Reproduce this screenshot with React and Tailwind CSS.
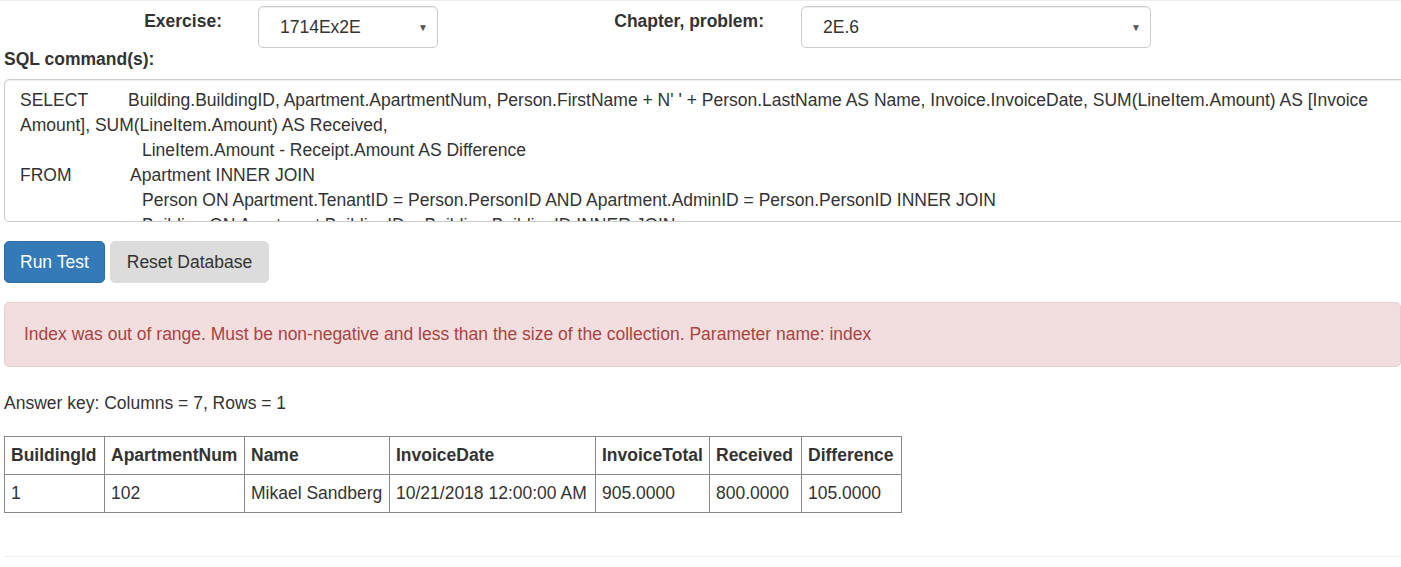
import React from 'react';

const headers = ['BuildingId', 'ApartmentNum', 'Name', 'InvoiceDate', 'InvoiceTotal', 'Received', 'Difference'];
const widths = ['w-[100px]', 'w-[140px]', 'w-[145px]', 'w-[206px]', 'w-[114px]', 'w-[92px]', 'w-[100px]'];
const row = ['1', '102', 'Mikael Sandberg', '10/21/2018 12:00:00 AM', '905.0000', '800.0000', '105.0000'];

function Select({ value, className }) {
  return (
    <div className={`flex h-[42px] items-center justify-between rounded-[5px] border border-[#ccc] bg-white pl-[21px] pr-[9px] shadow-[inset_0_1px_1px_rgba(0,0,0,0.075)] ${className}`}>
      <span>{value}</span>
      <span className="text-[10px] text-[#555]">▼</span>
    </div>
  );
}

export default function App() {
  return (
    <div className="min-h-[567px] overflow-hidden bg-white font-['Liberation_Sans',Arial,sans-serif] text-[17.5px] leading-[25px] text-[#333]">
      <div className="border-t border-[#eee]" />

      {/* exercise / chapter pickers */}
      <div className="flex items-start pt-[5px]">
        <label className="w-[222px] pt-[3px] text-right font-bold">Exercise:</label>
        <Select value="1714Ex2E" className="ml-[36px] w-[180px]" />
        <label className="w-[326px] pt-[3px] text-right font-bold">Chapter, problem:</label>
        <Select value="2E.6" className="ml-[37px] w-[350px]" />
      </div>

      <div className="pl-[4px]">
        <div className="mt-[-1px] font-bold">SQL command(s):</div>

        {/* SQL textarea */}
        <div className="mr-[-12px] mt-[7px] h-[143px] overflow-hidden rounded-[5px] border border-[#ccc] px-[15px] py-[8px] shadow-[inset_0_1px_1px_rgba(0,0,0,0.075)]">
          <div className="flex">
            <span className="w-[108px] shrink-0">SELECT</span>
            <span>Building.BuildingID, Apartment.ApartmentNum, Person.FirstName + N' ' + Person.LastName AS Name, Invoice.InvoiceDate, SUM(LineItem.Amount) AS [Invoice</span>
          </div>
          <div>Amount], SUM(LineItem.Amount) AS Received,</div>
          <div className="pl-[122px]">LineItem.Amount - Receipt.Amount AS Difference</div>
          <div className="flex">
            <span className="w-[110px] shrink-0">FROM</span>
            <span>Apartment INNER JOIN</span>
          </div>
          <div className="pl-[122px]">Person ON Apartment.TenantID = Person.PersonID AND Apartment.AdminID = Person.PersonID INNER JOIN</div>
          <div className="pl-[122px]">Building ON Apartment.BuildingID = Building.BuildingID INNER JOIN</div>
        </div>

        {/* actions */}
        <div className="mt-[19px] flex gap-[5px]">
          <button className="h-[42px] rounded-[5px] border border-[#2e6da4] bg-[#337ab7] px-[15px] text-white">Run Test</button>
          <button className="h-[42px] rounded-[5px] border border-[#dcdcdc] bg-[#dcdcdc] px-[16px] text-[#333]">Reset Database</button>
        </div>

        {/* error */}
        <div className="mt-[19px] rounded-[5px] border border-[#ebccd1] bg-[#f2dede] px-[19px] py-[19px] text-[#a94442]">
          Index was out of range. Must be non-negative and less than the size of the collection. Parameter name: index
        </div>

        <div className="mt-[24px]">Answer key: Columns = 7, Rows = 1</div>

        {/* answer table */}
        <table className="mt-[20px] table-fixed border-collapse">
          <thead>
            <tr>
              {headers.map((h, i) => (
                <th key={h} className={`${widths[i]} whitespace-nowrap border border-[#888] px-[6px] py-[6px] text-left font-bold`}>{h}</th>
              ))}
            </tr>
          </thead>
          <tbody>
            <tr>
              {row.map((c, i) => (
                <td key={i} className="whitespace-nowrap border border-[#888] px-[6px] py-[6px] text-left">{c}</td>
              ))}
            </tr>
          </tbody>
        </table>

        <div className="mt-[43px] border-t border-[#eee]" />
      </div>
    </div>
  );
}
